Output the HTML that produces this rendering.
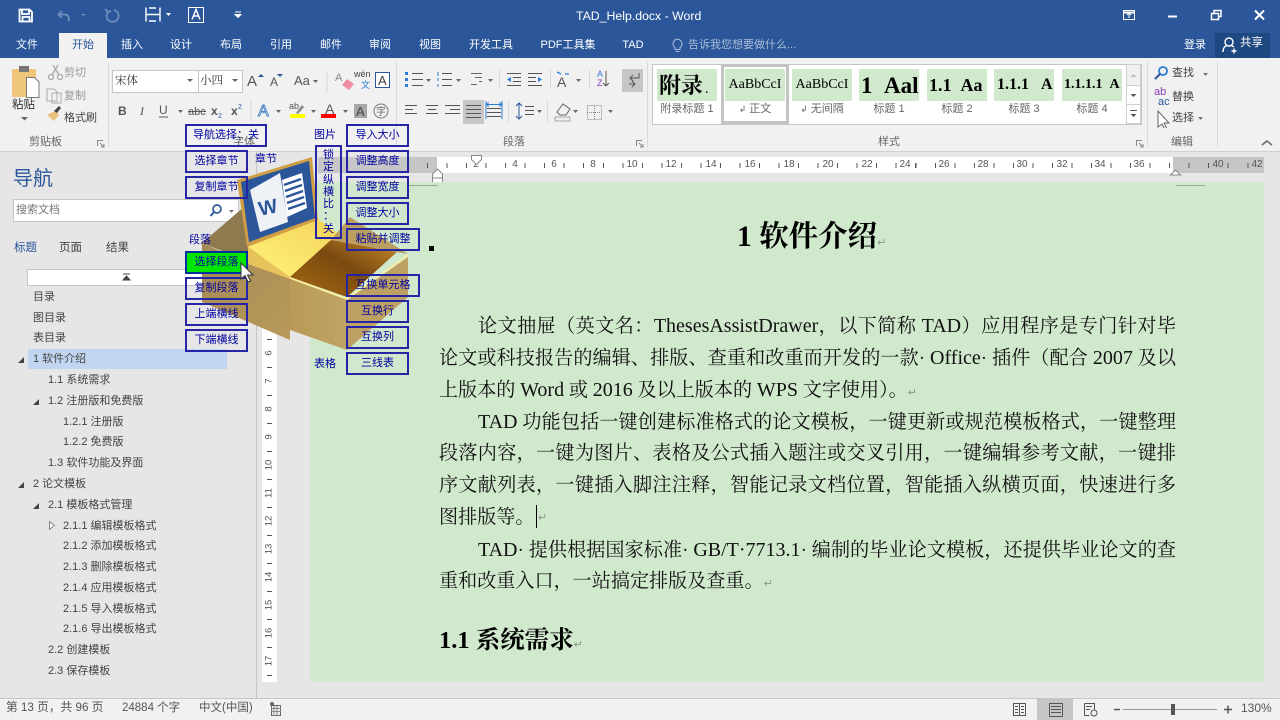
<!DOCTYPE html>
<html lang="zh"><head><meta charset="utf-8"><title>TAD_Help.docx - Word</title>
<style>
html,body{margin:0;padding:0;width:1280px;height:720px;overflow:hidden;background:#e6e6e6}
body{position:relative;font-family:"Liberation Sans","Noto Sans CJK SC",sans-serif;font-size:11px;color:#444}
.a,.t,.n,.b,.l,.dl{position:absolute;white-space:nowrap}
.t{line-height:16px}
.tab{position:absolute;top:37px;line-height:16px;color:#fff;font-size:11px;transform:translateX(-50%);white-space:nowrap}
.n{line-height:16px;color:#444;font-size:11px;margin-top:1px}
.b{box-sizing:border-box;border:2px solid #2525a5;color:#0000a0;font-size:11px;line-height:19px;text-align:center;height:23px}
.l{color:#0000a0;font-size:11px;line-height:16px}
.dl{font-family:"Liberation Serif","Noto Serif CJK SC",serif;font-size:19.100px;line-height:32px;height:32px;color:#111;text-align:justify;text-align-last:justify;white-space:normal;overflow:hidden}
.dl i{font-style:normal;font-size:20px}
.left{text-align:left;text-align-last:left}
.pm{font-size:11px;color:#8a9a88}
.r{position:absolute;top:158px;font-size:10px;line-height:14px;color:#555;transform:translateX(-50%)}
.v{position:absolute;left:262px;width:15px;text-align:center;font-size:9.500px;line-height:12px;color:#555;transform:rotate(-90deg)}
.s{position:absolute;top:101px;font-size:11px;line-height:16px;color:#666;text-align:center;white-space:nowrap}
.th{position:absolute;top:69px;height:32px;width:60px;background:#d0e8cc;overflow:hidden;font-family:"Liberation Serif","Noto Serif CJK SC",serif;color:#000;white-space:nowrap}
</style></head><body>

<!-- title bar -->
<div class="a" style="left:0;top:0;width:1280px;height:58px;background:#2b579a"></div>
<svg class="a" style="left:0;top:0" width="260" height="33" fill="none">
<path d="M19.500 9.500h10l2.500 2.500v9.500h-12.500z M22 9.500v4.500h7v-4.500 M22.500 21.500v-4.500h7v4.500" stroke="#fff" stroke-width="1.800"/>
<path d="M62 11l-3.500 3.500l3.500 3.500 M59 14.500h6a4 4 0 0 1 3 6.500" stroke="#6f8dbb" stroke-width="1.800"/>
<path d="M81 14l2.500 2l2.500-2z" fill="#6f8dbb"/>
<path d="M114 10a6 6 0 1 1-6 2 M105 9l3 3l3-1" stroke="#6f8dbb" stroke-width="1.800"/>
<path d="M146 7.500v14 M160 7.500v14 M146 14.500h14 M149 8h7 M149 21h7" stroke="#fff" stroke-width="1.400"/>
<path d="M166 13h5l-2.500 3z" fill="#fff"/>
<rect x="188.500" y="7.500" width="15" height="15" stroke="#fff"/>
<path d="M192 19.500l4-10l4 10 M193.500 16h5" stroke="#fff" stroke-width="1.500"/>
<path d="M235 12h6 M235 14.500h6l-3 3z" stroke="#fff" fill="#fff"/>
</svg>
<div class="t" style="left:576px;top:8px;color:#fff;font-size:12.300px">TAD_Help.docx - Word</div>
<svg class="a" style="left:1110px;top:0" width="170" height="33" fill="none" stroke="#fff">
<rect x="13.500" y="10.500" width="11" height="9"/><path d="M13 12.500h12" stroke-width="2"/><path d="M19 18v-5 M17 15l2-2l2 2"/>
<path d="M58 16.500h9" stroke-width="2"/>
<rect x="101.500" y="13.500" width="7" height="6" stroke-width="1.500"/><path d="M104 13v-2.500h7v6h-2.500" stroke-width="1.500"/>
<path d="M145 10.500l9 9 M154 10.500l-9 9" stroke-width="2"/>
</svg>

<!-- tabs -->
<div class="tab" style="left:27px">文件</div>
<div class="a" style="left:59px;top:33px;width:48px;height:26px;background:#f1f1f1"></div>
<div class="tab" style="left:83px;color:#2b579a">开始</div>
<div class="tab" style="left:132px">插入</div>
<div class="tab" style="left:181px">设计</div>
<div class="tab" style="left:231px">布局</div>
<div class="tab" style="left:281px">引用</div>
<div class="tab" style="left:331px">邮件</div>
<div class="tab" style="left:380px">审阅</div>
<div class="tab" style="left:430px">视图</div>
<div class="tab" style="left:491px">开发工具</div>
<div class="tab" style="left:568px">PDF工具集</div>
<div class="tab" style="left:633px">TAD</div>
<svg class="a" style="left:670px;top:37px" width="16" height="17" fill="none" stroke="#a9bcd8"><path d="M5 10.500a4.500 4.500 0 1 1 5 0v2h-5z M5.500 14.500h4"/></svg>
<div class="t" style="left:688px;top:37px;color:#a9bcd8;font-size:11px">告诉我您想要做什么...</div>
<div class="tab" style="left:1195px">登录</div>
<div class="a" style="left:1215px;top:33px;width:55px;height:25px;background:#1e4880"></div>
<svg class="a" style="left:1221px;top:36px" width="20" height="18" fill="none" stroke="#fff" stroke-width="1.400"><circle cx="8" cy="6" r="4"/><path d="M2 16c0-4 2-6 4-6.500 M10 9.500c1 .3 2 .8 3 1.500 M13 12.500v5 M10.500 15h5"/></svg>
<div class="t" style="left:1240px;top:35px;color:#fff;font-size:11.500px">共享</div>

<!-- ribbon -->
<div class="a" style="left:0;top:58px;width:1280px;height:93px;background:#f1f1f1;border-bottom:1px solid #d0d0d0"></div>
<div class="a" style="left:108px;top:62px;width:1px;height:85px;background:#dadada"></div>
<div class="a" style="left:396px;top:62px;width:1px;height:85px;background:#dadada"></div>
<div class="a" style="left:647px;top:62px;width:1px;height:85px;background:#dadada"></div>
<div class="a" style="left:1147px;top:62px;width:1px;height:85px;background:#dadada"></div>
<div class="a" style="left:1217px;top:62px;width:1px;height:85px;background:#dadada"></div>

<!-- clipboard -->
<svg class="a" style="left:8px;top:62px" width="100" height="66" fill="none">
<rect x="4" y="7" width="24" height="28" rx="1" fill="#f0c67c"/><rect x="11" y="4" width="10" height="6" fill="#777"/>
<path d="M18.500 15.500h8l4.500 4.500v15.500h-12.500z" fill="#fff" stroke="#777"/>
<g stroke="#aaa" stroke-width="1.300"><circle cx="43" cy="15" r="2.500"/><circle cx="52" cy="15" r="2.500"/><path d="M44 13l6-10 M51 13l-6-10"/></g>
<path d="M39 27h7l3 3v9h-10z M44 31h9v10h-9z" stroke="#aaa"/>
<path d="M39 53l7 6l5-6l-4-4z" fill="#e8c27a"/><path d="M46 49l5-5l2 2l-4 5z" fill="#444"/>
</svg>
<div class="t" style="left:12px;top:97px;color:#333;font-size:11.500px">粘贴</div>
<svg class="a" style="left:21px;top:116px" width="8" height="6"><path d="M0 1h7l-3.500 3.500z" fill="#666"/></svg>
<div class="t" style="left:64px;top:65px;color:#999">剪切</div>
<div class="t" style="left:64px;top:88px;color:#999">复制</div>
<div class="t" style="left:64px;top:110px;color:#444">格式刷</div>
<div class="t" style="left:29px;top:134px;color:#666">剪贴板</div>
<svg class="a" style="left:97px;top:140px" width="8" height="8" fill="none" stroke="#888"><path d="M.5 6v-5.500h5.500 M3 3l4 4 M7 4v3h-3"/></svg>

<!-- font -->
<div class="a" style="left:112px;top:70px;width:85px;height:21px;background:#fff;border:1px solid #c6c6c6"></div>
<div class="a" style="left:198px;top:70px;width:43px;height:21px;background:#fff;border:1px solid #c6c6c6"></div>
<div class="t" style="left:115px;top:73px;color:#333;font-size:11.500px;font-family:'Liberation Serif','Noto Serif CJK SC',serif">宋体</div>
<div class="t" style="left:200px;top:73px;color:#333;font-size:11.500px;font-family:'Liberation Serif','Noto Serif CJK SC',serif">小四</div>
<svg class="a" style="left:180px;top:60px" width="220" height="70" fill="none">
<path d="M7 19h6l-3 3z M52 19h6l-3 3z" fill="#666"/>
<text x="67" y="26" font-size="15" fill="#555" font-family="Liberation Sans">A</text><path d="M78 17l3-3l3 3z" fill="#2b579a"/>
<text x="90" y="26" font-size="12" fill="#555" font-family="Liberation Sans">A</text><path d="M97 14h6l-3 3z" fill="#2b579a"/>
<text x="114" y="25" font-size="13" fill="#555" font-family="Liberation Sans">Aa</text><path d="M133 20h5l-2.500 3z" fill="#666"/>
<path d="M147 11v22" stroke="#d8d8d8"/>
<text x="155" y="21" font-size="11" fill="#888" font-family="Liberation Sans">A</text><path d="M162 25l5-6l7 5l-5 6z" fill="#ee8ea0"/>
<text x="174" y="17" font-size="9" fill="#444" font-family="Liberation Sans">wén</text><text x="181" y="28" font-size="9" fill="#2b7cd3" font-family="Noto Sans CJK SC">文</text>
<rect x="195.500" y="12.500" width="14" height="15" stroke="#2b579a" fill="#fff"/><text x="198" y="25" font-size="13" fill="#444" font-family="Liberation Sans">A</text>
</svg>
<svg class="a" style="left:112px;top:98px" width="285" height="26" fill="none">
<text x="6" y="17" font-size="12" font-weight="bold" fill="#555" font-family="Liberation Sans">B</text>
<text x="28" y="17" font-size="12" font-style="italic" fill="#555" font-family="Liberation Serif">I</text>
<text x="47" y="16" font-size="12" fill="#555" font-family="Liberation Sans">U</text><path d="M47 19h9" stroke="#555"/><path d="M66 12h5l-2.500 3z" fill="#666"/>
<text x="76" y="17" font-size="11" fill="#555" font-family="Liberation Sans">abc</text><path d="M76 13.500h18" stroke="#555"/>
<text x="99" y="17" font-size="12" font-weight="bold" fill="#555" font-family="Liberation Sans">x</text><text x="106" y="20" font-size="7" fill="#2b579a" font-family="Liberation Sans">2</text>
<text x="119" y="17" font-size="12" font-weight="bold" fill="#555" font-family="Liberation Sans">x</text><text x="126" y="11" font-size="7" fill="#2b579a" font-family="Liberation Sans">2</text>
<path d="M139 2v22" stroke="#d8d8d8"/>
<text x="146" y="18" font-size="16" fill="#fff" stroke="#3f7fc4" stroke-width=".9" font-family="Liberation Sans">A</text><path d="M164 12h5l-2.500 3z" fill="#666"/>
<text x="177" y="11" font-size="9" fill="#555" font-family="Liberation Sans">ab</text><path d="M184 15l6-8l2 2l-6 7z" fill="#888"/><rect x="178" y="16" width="15" height="4" fill="#ffff00"/><path d="M199 12h5l-2.500 3z" fill="#666"/>
<text x="213" y="16" font-size="14" fill="#555" font-family="Liberation Sans">A</text><rect x="209" y="16" width="15" height="4" fill="#ff0000"/><path d="M231 12h5l-2.500 3z" fill="#666"/>
<rect x="242" y="6" width="13" height="14" fill="#a6a6a6"/><text x="244" y="18" font-size="13" fill="#444" font-family="Liberation Sans">A</text>
<circle cx="269" cy="13" r="7" stroke="#777"/><text x="264" y="17" font-size="10" fill="#666" font-family="Noto Sans CJK SC">字</text>
</svg>
<div class="t" style="left:233px;top:134px;color:#666">字体</div>

<!-- paragraph -->
<svg class="a" style="left:400px;top:62px" width="245" height="84" fill="none">
<g stroke="#555"><path d="M12 11.500h11 M12 17.500h11 M12 23.500h11"/></g><g fill="#2b7cd3"><rect x="5" y="10" width="3" height="3"/><rect x="5" y="16" width="3" height="3"/><rect x="5" y="22" width="3" height="3"/></g>
<path d="M26 17h5l-2.500 3z" fill="#666"/>
<path d="M56 17h5l-2.500 3z M88 17h5l-2.500 3z" fill="#666"/>
<g stroke="#555"><path d="M42 11.500h10 M42 17.500h10 M42 23.500h10"/></g><g stroke="#2b7cd3"><path d="M38 10v4 M38 16v3 M38 22v3"/></g>
<g stroke="#666"><path d="M71 11.500h11 M75 15.500h7 M79 19.500h3 M71 22.500h6"/></g>
<path d="M99.500 8v18" stroke="#d8d8d8"/>
<g stroke="#555"><path d="M107 11.500h14 M113 15.500h8 M113 19.500h8 M107 23.500h14 M128 11.500h14 M128 15.500h8 M128 19.500h8 M128 23.500h14"/></g>
<path d="M111 15l-4 2.500l4 2.500z M138 15l4 2.500l-4 2.500z" fill="#2b7cd3"/>
<path d="M150.500 8v18" stroke="#d8d8d8"/>
<path d="M157 10l4 2M165 12h4" stroke="#2b7cd3" stroke-width="1.300"/><text x="157" y="25" font-size="14" fill="#555" font-family="Liberation Sans">A</text><path d="M176 17h5l-2.500 3z" fill="#666"/>
<path d="M189.500 8v18" stroke="#d8d8d8"/>
<text x="197" y="15" font-size="9" fill="#2b7cd3" font-family="Liberation Sans">A</text><text x="197" y="24" font-size="9" fill="#8a3ab9" font-family="Liberation Sans">Z</text><path d="M206 9v15 M203 21l3 3l3-3" stroke="#555"/>
<rect x="222" y="7" width="21" height="23" fill="#c6c6c6"/><path d="M229 22h6 M232 19l3 3l-3 3 M231 16h8v-5 M233 13l-3 3l3 3" stroke="#555"/>
<g stroke="#555"><path d="M5 43.500h12 M5 47.500h8 M5 51.500h12 M26 43.500h12 M28 47.500h8 M26 51.500h12 M45 43.500h15 M50 47.500h10 M45 51.500h15"/></g>
<rect x="63" y="38" width="21" height="24" fill="#c6c6c6"/>
<g stroke="#555"><path d="M66 43.500h15 M66 47.500h15 M66 51.500h15 M66 55.500h15"/></g>
<g stroke="#555"><path d="M87 46.500h14 M87 50.500h14 M87 54.500h14"/></g><path d="M86 42.500h16 M89 40.500l-3 2l3 2 M99 40.500l3 2l-3 2 M86 39v18 M102 39v18" stroke="#2b7cd3"/>
<path d="M108.500 38v22" stroke="#d8d8d8"/>
<path d="M119 41v16 M116 44l3-3l3 3 M116 54l3 3l3-3" stroke="#2b579a"/><path d="M125 44.500h9 M125 48.500h9 M125 52.500h9" stroke="#555"/><path d="M137 48h5l-2.500 3z" fill="#666"/>
<path d="M147.500 38v22" stroke="#d8d8d8"/>
<path d="M157 50l6-8l7 5l-4 6h-6z" stroke="#666"/><rect x="155" y="55" width="15" height="4" fill="#eee" stroke="#888" stroke-width=".7"/><path d="M173 48h5l-2.500 3z" fill="#666"/>
<rect x="187.500" y="43.500" width="14" height="14" stroke="#888" stroke-dasharray="1 1"/><path d="M194.500 44v14 M187 50.500h14" stroke="#888" stroke-dasharray="1 1"/><path d="M208 48h5l-2.500 3z" fill="#666"/>
</svg>
<div class="t" style="left:503px;top:134px;color:#666">段落</div>
<svg class="a" style="left:636px;top:140px" width="8" height="8" fill="none" stroke="#888"><path d="M.5 6v-5.500h5.500 M3 3l4 4 M7 4v3h-3"/></svg>

<!-- styles -->
<div class="a" style="left:652px;top:64px;width:488px;height:59px;background:#fff;border:1px solid #c6c6c6"></div>
<div class="a" style="left:721px;top:64px;box-sizing:border-box;width:68px;height:60px;border:3px solid #c3c3c3"></div>
<div class="th" style="left:657px;font-size:22px;font-weight:bold;line-height:34px;padding-left:2px;width:58px">附录<span style="font-size:10px"> .</span></div>
<div class="th" style="left:725px;font-size:14px;line-height:32px;text-align:center">AaBbCcI</div>
<div class="th" style="left:792px;font-size:14px;line-height:32px;text-align:center">AaBbCcI</div>
<div class="th" style="left:859px;font-size:23px;font-weight:bold;line-height:34px;padding-left:2px;width:58px">1&nbsp;&nbsp;Aal</div>
<div class="th" style="left:927px;font-size:18px;font-weight:bold;line-height:32px;padding-left:2px;width:58px">1.1&nbsp;&nbsp;Aa</div>
<div class="th" style="left:994px;font-size:16px;font-weight:bold;line-height:32px;padding-left:3px;width:57px">1.1.1&nbsp;&nbsp;&nbsp;A</div>
<div class="th" style="left:1062px;font-size:14px;font-weight:bold;line-height:32px;padding-left:2px;width:58px">1.1.1.1&nbsp;&nbsp;A</div>
<div class="s" style="left:657px;width:60px">附录标题 1</div>
<div class="s" style="left:725px;width:60px"><span style="font-size:9px">↲</span> 正文</div>
<div class="s" style="left:792px;width:60px"><span style="font-size:9px">↲</span> 无间隔</div>
<div class="s" style="left:859px;width:60px">标题 1</div>
<div class="s" style="left:927px;width:60px">标题 2</div>
<div class="s" style="left:994px;width:60px">标题 3</div>
<div class="s" style="left:1062px;width:60px">标题 4</div>
<svg class="a" style="left:1126px;top:64px" width="15" height="60" fill="none"><rect x=".5" y=".5" width="14" height="21" fill="#f1f1f1" stroke="#d0d0d0"/><rect x=".5" y="21.500" width="14" height="19" fill="#fff" stroke="#d0d0d0"/><rect x=".5" y="40.500" width="14" height="19" fill="#fff" stroke="#d0d0d0"/><path d="M4.500 13h6l-3-3z" fill="#bbb"/><path d="M4.500 30h6l-3 3z" fill="#555"/><path d="M4 46.500h7" stroke="#555"/><path d="M4.500 50h6l-3 3z" fill="#555"/></svg>
<div class="t" style="left:878px;top:134px;color:#666">样式</div>
<svg class="a" style="left:1136px;top:140px" width="8" height="8" fill="none" stroke="#888"><path d="M.5 6v-5.500h5.500 M3 3l4 4 M7 4v3h-3"/></svg>

<!-- editing -->
<svg class="a" style="left:1152px;top:62px" width="70" height="66" fill="none">
<circle cx="11" cy="9" r="4" stroke="#2b7cd3" stroke-width="1.800"/><path d="M8 12l-5 5" stroke="#2b579a" stroke-width="2"/>
<text x="2" y="33" font-size="11" fill="#8a3ab9" font-family="Liberation Sans">ab</text><text x="6" y="43" font-size="11" fill="#2b579a" font-family="Liberation Sans">ac</text>
<path d="M6 49v16l4-3l3 6l2-1l-3-6h5z" fill="#fff" stroke="#666"/>
<path d="M51 11h5l-2.500 3z" fill="#777"/><path d="M46 55h5l-2.500 3z" fill="#777"/>
</svg>
<div class="t" style="left:1172px;top:65px;color:#444">查找</div>
<div class="t" style="left:1172px;top:89px;color:#444">替换</div>
<div class="t" style="left:1172px;top:110px;color:#444">选择</div>
<div class="t" style="left:1171px;top:134px;color:#666">编辑</div>
<svg class="a" style="left:1260px;top:138px" width="14" height="10" fill="none"><path d="M2 7l5-4l5 4" stroke="#666" stroke-width="1.500"/></svg>

<!-- nav pane -->
<div class="a" style="left:256px;top:152px;width:1px;height:547px;background:#c6c6c6"></div>
<div class="t" style="left:13px;top:168px;font-size:20px;line-height:22px;color:#2b579a">导航</div>
<div class="a" style="left:13px;top:199px;width:224px;height:21px;background:#fff;border:1px solid #c6c6c6"></div>
<div class="t" style="left:16px;top:202px;color:#777;font-size:11px">搜索文档</div>
<svg class="a" style="left:208px;top:202px" width="30" height="17" fill="none"><circle cx="9" cy="7" r="4" stroke="#2b579a" stroke-width="1.700"/><path d="M6 10l-3.500 4" stroke="#2b579a" stroke-width="2"/><path d="M21 8h5l-2.500 3z" fill="#777"/></svg>
<div class="t" style="left:14px;top:240px;color:#2b579a;font-size:11.500px">标题</div>
<div class="t" style="left:59px;top:240px;color:#444;font-size:11.500px">页面</div>
<div class="t" style="left:106px;top:240px;color:#444;font-size:11.500px">结果</div>
<div class="a" style="left:27px;top:269px;width:199px;height:15px;background:#fff;border:1px solid #c6c6c6"></div>
<svg class="a" style="left:122px;top:273px" width="10" height="9"><path d="M1 1h7 M1 7h7l-3.500-4z" stroke="#444" fill="#444"/></svg>
<div class="a" style="left:28px;top:349px;width:199px;height:20px;background:#c3d6f1"></div>
<div class="n" style="left:33px;top:288px">目录</div>
<div class="n" style="left:33px;top:309px">图目录</div>
<div class="n" style="left:33px;top:329px">表目录</div>
<div class="n" style="left:33px;top:350px">1 软件介绍</div>
<div class="n" style="left:48px;top:371px">1.1 系统需求</div>
<div class="n" style="left:48px;top:392px">1.2 注册版和免费版</div>
<div class="n" style="left:63px;top:413px">1.2.1 注册版</div>
<div class="n" style="left:63px;top:433px">1.2.2 免费版</div>
<div class="n" style="left:48px;top:454px">1.3 软件功能及界面</div>
<div class="n" style="left:33px;top:475px">2 论文模板</div>
<div class="n" style="left:48px;top:496px">2.1 模板格式管理</div>
<div class="n" style="left:63px;top:517px">2.1.1 编辑模板格式</div>
<div class="n" style="left:63px;top:537px">2.1.2 添加模板格式</div>
<div class="n" style="left:63px;top:558px">2.1.3 删除模板格式</div>
<div class="n" style="left:63px;top:579px">2.1.4 应用模板格式</div>
<div class="n" style="left:63px;top:600px">2.1.5 导入模板格式</div>
<div class="n" style="left:63px;top:620px">2.1.6 导出模板格式</div>
<div class="n" style="left:48px;top:641px">2.2 创建模板</div>
<div class="n" style="left:48px;top:662px">2.3 保存模板</div>
<svg class="a" style="left:0;top:340px" width="60" height="200"><path d="M18 23l6-6v6z M33 65l6-6v6z M18 148l6-6v6z M33 169l6-6v6z" fill="#444"/><path d="M49.500 181.500l5 4l-5 4z" fill="#fff" stroke="#888"/></svg>

<!-- rulers -->
<div class="a" style="left:318px;top:157px;width:119px;height:16px;background:#c6c6c6"></div>
<div class="a" style="left:437px;top:157px;width:736px;height:16px;background:#fff"></div>
<div class="a" style="left:1173px;top:157px;width:91px;height:16px;background:#c6c6c6"></div>
<div class="a" style="left:427px;top:163px;width:837px;height:5px;background:repeating-linear-gradient(90deg,#555 0,#555 1px,transparent 1px,transparent 19.530px)"></div>
<span class="r" style="left:476px">2</span><span class="r" style="left:515px">4</span><span class="r" style="left:554px">6</span><span class="r" style="left:593px">8</span><span class="r" style="left:632px">10</span><span class="r" style="left:671px">12</span><span class="r" style="left:711px">14</span><span class="r" style="left:750px">16</span><span class="r" style="left:789px">18</span><span class="r" style="left:828px">20</span><span class="r" style="left:867px">22</span><span class="r" style="left:905px">24</span><span class="r" style="left:944px">26</span><span class="r" style="left:983px">28</span><span class="r" style="left:1022px">30</span><span class="r" style="left:1062px">32</span><span class="r" style="left:1100px">34</span><span class="r" style="left:1139px">36</span><span class="r" style="left:1218px">40</span><span class="r" style="left:1257px">42</span>
<svg class="a" style="left:430px;top:152px" width="760" height="34" fill="#fff" stroke="#888"><path d="M41.500 3.500h10v4l-5 5l-5-5z"/><path d="M2.500 22l5-5l5 5v9.500h-10z M2.500 26h10"/><path d="M740.500 23l5-5l5 5z"/></svg>

<!-- vertical ruler -->
<div class="a" style="left:262px;top:182px;width:15px;height:500px;background:#fff"></div>
<div class="a" style="left:267px;top:182px;width:5px;height:500px;background:repeating-linear-gradient(180deg,#555 0,#555 1px,transparent 1px,transparent 28px);background-position:0 17px"></div>
<span class="v" style="top:347px">6</span><span class="v" style="top:375px">7</span><span class="v" style="top:403px">8</span><span class="v" style="top:431px">9</span><span class="v" style="top:459px">10</span><span class="v" style="top:487px">11</span><span class="v" style="top:515px">12</span><span class="v" style="top:543px">13</span><span class="v" style="top:571px">14</span><span class="v" style="top:599px">15</span><span class="v" style="top:627px">16</span><span class="v" style="top:655px">17</span>

<!-- document -->
<div class="a" style="left:310px;top:182px;width:954px;height:500px;background:#d0e8cc"></div>
<div class="a" style="left:1176px;top:185px;width:29px;height:1px;background:#9aa89a"></div>
<div class="a" style="left:409px;top:185px;width:29px;height:1px;background:#9aa89a"></div>
<div class="a" style="left:429px;top:246px;width:5px;height:5px;background:#000"></div>
<div class="a" style="left:737px;top:217px;font-family:'Liberation Serif','Noto Serif CJK SC',serif;font-weight:bold;font-size:29.500px;line-height:40px;color:#000;white-space:nowrap">1 软件介绍<span style="font-size:11px;font-weight:normal;color:#8a9a88">↵</span></div>
<div class="dl" style="left:478px;top:310px;width:698px">论文抽屉（英文名：<i>ThesesAssistDrawer</i>，以下简称 <i>TAD</i>）应用程序是专门针对毕业</div>
<div class="dl" style="left:439px;top:342px;width:737px">论文或科技报告的编辑、排版、查重和改重而开发的一款· <i>Office</i>· 插件（配合 <i>2007</i> 及以</div>
<div class="dl left" style="left:439px;top:374px;width:737px">上版本的 <i>Word</i> 或 <i>2016</i> 及以上版本的 <i>WPS</i> 文字使用）。<span class="pm">↵</span></div>
<div class="dl" style="left:478px;top:406px;width:698px"><i>TAD</i> 功能包括一键创建标准格式的论文模板，一键更新或规范模板格式，一键整理</div>
<div class="dl" style="left:439px;top:438px;width:737px">段落内容，一键为图片、表格及公式插入题注或交叉引用，一键编辑参考文献，一键排</div>
<div class="dl" style="left:439px;top:470px;width:737px">序文献列表，一键插入脚注注释，智能记录文档位置，智能插入纵横页面，快速进行多</div>
<div class="dl left" style="left:439px;top:502px;width:737px">图排版等。</div>
<div class="a" style="left:536px;top:505px;width:1px;height:23px;background:#000"></div>
<div class="a pm" style="left:538px;top:510px;line-height:16px">↵</div>
<div class="dl" style="left:478px;top:534px;width:698px"><i>TAD</i>· 提供根据国家标准· <i>GB/T·7713.1</i>· 编制的毕业论文模板，还提供毕业论文的查</div>
<div class="dl left" style="left:439px;top:566px;width:737px">重和改重入口，一站搞定排版及查重。<span class="pm">↵</span></div>
<div class="a" style="left:439px;top:624px;font-family:'Liberation Serif','Noto Serif CJK SC',serif;font-weight:bold;font-size:24.500px;line-height:34px;color:#000;white-space:nowrap">1.1 系统需求<span style="font-size:11px;font-weight:normal;color:#8a9a88">↵</span></div>

<!-- status -->
<div class="a" style="left:0;top:698px;width:1280px;height:22px;background:#f1f1f1;border-top:1px solid #c6c6c6;box-sizing:border-box"></div>
<div class="t" style="left:6px;top:700px;font-size:11.700px;color:#555">第 13 页，共 96 页</div>
<div class="t" style="left:122px;top:700px;font-size:11.500px;color:#555">24884 个字</div>
<div class="t" style="left:199px;top:700px;font-size:11.500px;color:#555">中文(中国)</div>
<svg class="a" style="left:269px;top:701px" width="14" height="16" fill="none"><rect x="2.500" y="4.500" width="9" height="10" stroke="#666"/><path d="M2 7.500h10 M2 10.500h10 M5 5v10 M8 5v10" stroke="#888"/><circle cx="3" cy="3" r="2" fill="#666"/></svg>
<div class="a" style="left:1037px;top:699px;width:36px;height:21px;background:#c6c6c6"></div>
<svg class="a" style="left:1010px;top:699px" width="150" height="21" fill="none" stroke="#555">
<path d="M3.500 4.500h6v12h-6z M9.500 4.500h6v12h-6z M5 7.500h3 M5 10.500h3 M5 13.500h3 M11 7.500h3 M11 10.500h3 M11 13.500h3"/>
<rect x="39.500" y="4.500" width="13" height="13"/><path d="M41 7.500h10 M41 10.500h10 M41 13.500h10"/>
<path d="M74.500 4.500h10v6 M74.500 4.500v12h5 M76 7.500h6 M76 10.500h4"/><circle cx="84" cy="14" r="3"/>
</svg>
<svg class="a" style="left:1110px;top:699px" width="125" height="21" fill="none">
<path d="M4 10.500h6" stroke="#555" stroke-width="1.500"/>
<path d="M13 10.500h94" stroke="#999"/><rect x="61" y="5" width="4" height="11" fill="#555"/>
<path d="M114 10.500h8 M118 6.500v8" stroke="#555" stroke-width="1.500"/>
</svg>
<div class="t" style="left:1241px;top:700px;font-size:12px;color:#555">130%</div>

<!-- gold box overlay -->
<svg class="a" style="left:190px;top:150px" width="230" height="210" viewBox="190 150 230 210">
<defs>
<linearGradient id="g1" x1="0" y1="0" x2="1" y2="1"><stop offset="0" stop-color="#a58a55"/><stop offset="1" stop-color="#b8995a"/></linearGradient>
<linearGradient id="g2" x1="0" y1="0" x2="1" y2="0"><stop offset="0" stop-color="#b99a57"/><stop offset="1" stop-color="#bfa366"/></linearGradient>
<linearGradient id="g3" x1="0" y1="1" x2="1" y2="0"><stop offset="0" stop-color="#fff27a"/><stop offset="1" stop-color="#f2cf55"/></linearGradient>
<linearGradient id="g4" x1="0" y1="1" x2="1" y2="0"><stop offset="0" stop-color="#a8690f"/><stop offset=".55" stop-color="#7a4a10"/><stop offset="1" stop-color="#c98a2a"/></linearGradient>
</defs>
<path d="M245 206L202 243L250 262L290 250L262 215z" fill="#8f7a50"/>
<path d="M202 243L202 302L290 340L290 278L248 263z" fill="url(#g1)"/>
<path d="M248 247L290 277L351 243L318 219L262 210z" fill="url(#g3)"/>
<path d="M248 247L248 264L290 279L290 277z" fill="#e8c25a"/>
<path d="M290 278L290 330L347 350L347 300z" fill="url(#g2)"/>
<path d="M347 300L347 350L408 297L408 257z" fill="#bda064"/>
<path d="M290 277L331 240L397 252L347 297z" fill="url(#g4)"/>
<path d="M331 240L350 217L408 254L397 252z" fill="#bb9f60"/>
<path d="M290 278L347 299L408 255" fill="none" stroke="#fdf09a" stroke-width="1.500"/>
<path d="M237 180L312 157L318 220L247 247z" fill="#d09f45"/>
<path d="M241 182L309 161L315 218L249 242z" fill="#2b579a"/>
<path d="M250 190L280 173L288 222L260 232z" fill="#eef1f6"/>
<text x="258" y="214" font-size="20" font-weight="bold" fill="#2b579a" font-family="Liberation Sans" transform="rotate(-12 268 205)">W</text>
<path d="M282 180L302 173L307 208L287 217z" fill="#fff"/>
<path d="M284 185L301 179 M285 191L302 185 M286 197L303 191 M287 203L304 197 M288 209L305 203" stroke="#2b579a" stroke-width="2.500"/>
</svg>

<!-- overlay buttons -->
<div class="b" style="left:185px;top:124px;width:82px">导航选择：关</div>
<div class="b" style="left:185px;top:150px;width:63px">选择章节</div>
<div class="b" style="left:185px;top:176px;width:63px">复制章节</div>
<div class="l" style="left:189px;top:232px">段落</div>
<div class="b" style="left:185px;top:251px;width:63px;background:#00e600;border-color:#00309a">选择段落</div>
<div class="b" style="left:185px;top:277px;width:63px">复制段落</div>
<div class="b" style="left:185px;top:303px;width:63px">上端横线</div>
<div class="b" style="left:185px;top:329px;width:63px">下端横线</div>
<div class="l" style="left:255px;top:151px">章节</div>
<div class="l" style="left:314px;top:127px">图片</div>
<div class="b" style="left:315px;top:145px;width:27px;height:94px;line-height:12.300px;padding-top:2px;white-space:normal">锁<br>定<br>纵<br>横<br>比<br>：<br>关</div>
<div class="b" style="left:346px;top:124px;width:63px">导入大小</div>
<div class="b" style="left:346px;top:150px;width:63px">调整高度</div>
<div class="b" style="left:346px;top:176px;width:63px">调整宽度</div>
<div class="b" style="left:346px;top:202px;width:63px">调整大小</div>
<div class="b" style="left:346px;top:228px;width:74px">粘贴并调整</div>
<div class="b" style="left:346px;top:274px;width:74px">互换单元格</div>
<div class="b" style="left:346px;top:300px;width:63px">互换行</div>
<div class="b" style="left:346px;top:326px;width:63px">互换列</div>
<div class="b" style="left:346px;top:352px;width:63px">三线表</div>
<div class="l" style="left:314px;top:356px">表格</div>
<svg class="a" style="left:240px;top:262px" width="14" height="22"><path d="M1 1v16l4-3.500l3 6.500l2.500-1l-3-6h5.500z" fill="#fff" stroke="#333"/></svg>
</body></html>
